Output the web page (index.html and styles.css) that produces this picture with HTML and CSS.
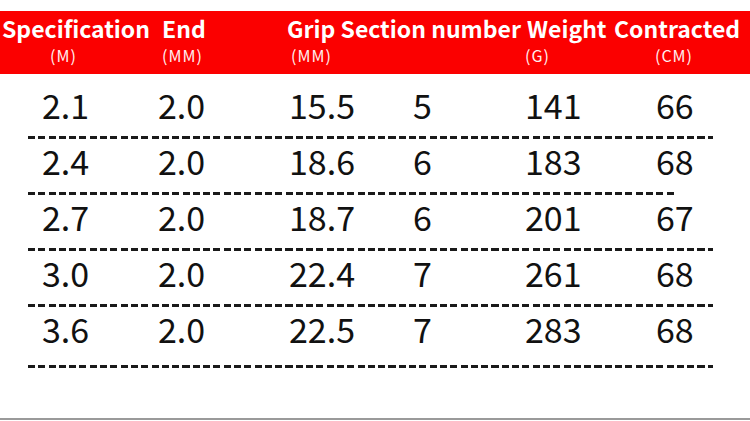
FILE: index.html
```html
<!DOCTYPE html>
<html lang="en">
<head>
    <meta charset="UTF-8">
    <meta name="viewport" content="width=device-width, initial-scale=1.0">
    <title>Rod Specification</title>
    <link rel="stylesheet" href="styles.css">
</head>
<body>
    <div class="page">
        <div class="spec-head">
            <div class="head-titles">
                <span>Specification</span>
                <span>End</span>
                <span>Grip Section number</span>
                <span>Weight</span>
                <span>Contracted</span>
            </div>
            <div class="head-units">
                <span>(M)</span>
                <span>(MM)</span>
                <span>(MM)</span>
                <span>(G)</span>
                <span>(CM)</span>
            </div>
        </div>

        <div class="spec-body">
            <div class="spec-row">
                <span>2.1</span><span>2.0</span><span>15.5</span><span>5</span><span>141</span><span>66</span>
            </div>
            <div class="dash-line"></div>
            <div class="spec-row">
                <span>2.4</span><span>2.0</span><span>18.6</span><span>6</span><span>183</span><span>68</span>
            </div>
            <div class="dash-line short"></div>
            <div class="spec-row">
                <span>2.7</span><span>2.0</span><span>18.7</span><span>6</span><span>201</span><span>67</span>
            </div>
            <div class="dash-line"></div>
            <div class="spec-row">
                <span>3.0</span><span>2.0</span><span>22.4</span><span>7</span><span>261</span><span>68</span>
            </div>
            <div class="dash-line"></div>
            <div class="spec-row">
                <span>3.6</span><span>2.0</span><span>22.5</span><span>7</span><span>283</span><span>68</span>
            </div>
            <div class="dash-line last"></div>
        </div>

        <div class="bottom-rule"></div>
    </div>
</body>
</html>
```

FILE: styles.css
```css
body {
    margin: 0;
    background-color: #ffffff;
    font-family: 'Noto Sans CJK SC', 'Noto Sans', sans-serif;
    color: #111111;
}

.page {
    display: flex;
    flex-direction: column;
    width: 750px;
    height: 421px;
    overflow: hidden;
}

.spec-head {
    margin-top: 11px;
    padding: 2px 0 9px 0;
    background-color: #fb0000;
    color: #ffffff;
}

.head-titles {
    display: grid;
    grid-template-columns: 160px 125px 240px 87px auto;
    padding-left: 2px;
    font-size: 23px;
    font-weight: bold;
    line-height: 30px;
    white-space: nowrap;
}

.head-units {
    display: grid;
    grid-template-columns: 112px 129px 234px 130px auto;
    margin-top: 2px;
    padding-left: 50px;
    font-size: 16px;
    line-height: 20px;
    letter-spacing: 1px;
    color: #fff0f0;
}

.spec-body {
    padding-top: 11px;
}

.spec-row {
    display: grid;
    grid-template-columns: 116px 131px 124px 112px 131px auto;
    padding-left: 42px;
    height: 41px;
    font-size: 34px;
    line-height: 40px;
}

.dash-line {
    width: 685px;
    height: 3px;
    margin: 10px 0 2px 28px;
    background: repeating-linear-gradient(to right, #1a1a1a 0, #1a1a1a 7px, transparent 7px, transparent 10.3px);
}

.dash-line.short {
    width: 649px;
}

.dash-line.last {
    margin-top: 15px;
}

.bottom-rule {
    margin-top: auto;
    margin-bottom: 1px;
    height: 2px;
    background-color: #9a9a9a;
}
```
